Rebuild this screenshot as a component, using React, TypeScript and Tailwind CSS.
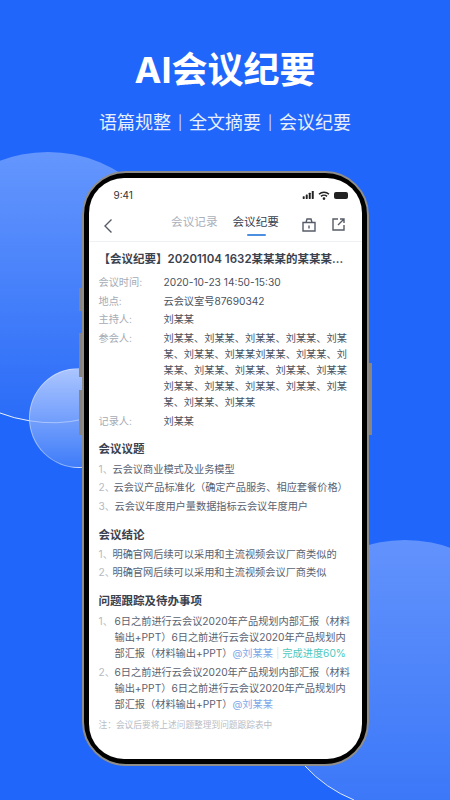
import React from "react";

const FONT = { fontFamily: '"Inter","Noto Sans CJK SC",sans-serif' };

function Meta({ label, children }: { label: string; children: React.ReactNode }) {
  return (
    <div className="flex">
      <div className="w-[65px] shrink-0 text-[#a5abb5]">{label}</div>
      <div className="w-[184px] text-[#4a5260] break-all">{children}</div>
    </div>
  );
}

function Item({ n, numClass, children }: { n: string; numClass: string; children: React.ReactNode }) {
  return (
    <div className="flex text-[#5a6270]">
      <span className={`${numClass} shrink-0 text-[#b4b9c2]`}>{n}</span>
      <span className="whitespace-nowrap">{children}</span>
    </div>
  );
}

function Todo({ n, children }: { n: string; children: React.ReactNode }) {
  return (
    <div className="flex text-[#5a6270]">
      <span className="w-[16px] shrink-0 text-[#b4b9c2]">{n}</span>
      <span className="w-[236px] break-all">{children}</span>
    </div>
  );
}

export default function App() {
  return (
    <div className="relative h-[800px] w-[450px] overflow-hidden bg-[#2066fa]" style={FONT}>
      <div className="absolute left-[-87px] top-[152px] h-[270px] w-[270px] rounded-full bg-[linear-gradient(180deg,#6496fd,#2a6cf8)]" />
      <div className="absolute left-[29px] top-[368px] h-[100px] w-[100px] rounded-full border border-white/40 bg-[linear-gradient(180deg,#abc5ff,#3f7cf9)]" />
      <div className="absolute left-[270px] top-[540px] h-[270px] w-[270px] rounded-full bg-[linear-gradient(180deg,#6292fc,#3a77f8)]" />
      <svg className="absolute left-0 top-0" width="450" height="800" fill="none">
        <path d="M0 413 A135 135 0 0 0 29 420.7" stroke="#fff" strokeOpacity=".9" />
        <path d="M29 420.7 A135 135 0 0 0 84 419" stroke="#fff" strokeOpacity=".4" />
        <path d="M305 766 A135 135 0 0 0 354 800" stroke="#fff" strokeOpacity=".85" />
      </svg>

      <div className="relative flex flex-col items-center">
        <h1 className="mt-[45px] text-[36px] leading-[50px] font-bold text-white">AI会议纪要</h1>
        <div className="mt-[15px] flex text-[18px] leading-[26px] text-[#e8efff]">
          <span>语篇规整</span>
          <span className="w-[18px] text-center text-[14px] text-[#c4d6ff]">|</span>
          <span>全文摘要</span>
          <span className="w-[18px] text-center text-[14px] text-[#c4d6ff]">|</span>
          <span>会议纪要</span>
        </div>

        <div className="relative mt-[35px] h-[595px] w-[287px] rounded-[44px] border-[2px] border-[#8f8d8a] bg-black p-[5px]">
          <div className="absolute left-[-5px] top-[115px] h-[23px] w-[3px] bg-[#8a8580]" />
          <div className="absolute left-[-5px] top-[160px] h-[44px] w-[3px] bg-[#8a8580]" />
          <div className="absolute left-[-5px] top-[217px] h-[45px] w-[3px] bg-[#8a8580]" />
          <div className="absolute right-[-5px] top-[190px] h-[72px] w-[3px] bg-[#8a8580]" />

          <div className="h-full w-full overflow-hidden rounded-[35px] bg-white">
            <div className="flex items-center justify-between pl-[25px] pr-[14px] pt-[10px] text-[10px] leading-[14px] text-[#333]">
              <span>9:41</span>
              <div className="flex items-center gap-[3px]">
                <svg width="13" height="8" viewBox="0 0 13 9" fill="#222"><rect x="0" y="6" width="2.2" height="3" rx=".5" /><rect x="3.4" y="4" width="2.2" height="5" rx=".5" /><rect x="6.8" y="2" width="2.2" height="7" rx=".5" /><rect x="10.2" y="0" width="2.2" height="9" rx=".5" /></svg>
                <svg width="12" height="9" viewBox="0 0 12 9" fill="none" stroke="#222" strokeWidth="1.5"><path d="M1 3.2a7.2 7.2 0 0 1 10 0" /><path d="M3 5.4a4.3 4.3 0 0 1 6 0" /><circle cx="6" cy="7.6" r=".6" fill="#222" /></svg>
                <div className="ml-[1px] h-[7px] w-[14px] rounded-[2px] bg-[#222]" />
              </div>
            </div>

            <div className="relative flex h-[40px] items-center justify-center gap-[15px] border-b border-[#f0f1f4] text-[11.6px] leading-[16px]">
              <svg className="absolute left-[14px] top-[16px]" width="10" height="16" viewBox="0 0 10 16" fill="none" stroke="#555c68" strokeWidth="1.4"><path d="M8.5 1.5 2 8l6.5 6.5" /></svg>
              <span className="text-[#aab0ba]">会议记录</span>
              <span className="relative text-[#3a414d]">
                会议纪要
                <span className="absolute left-[14px] top-[20px] h-[2px] w-[19px] rounded-full bg-[#4c8fe0]" />
              </span>
              <svg className="absolute left-[212px] top-[15px]" width="16" height="16" viewBox="0 0 16 16" fill="none" stroke="#555c68" strokeWidth="1.4"><path d="M2 5.5h12V14H2zM5 5.5 6 2h4l1 3.5M8 8.5v3" /></svg>
              <svg className="absolute left-[242px] top-[15px]" width="15" height="15" viewBox="0 0 15 15" fill="none" stroke="#555c68" strokeWidth="1.4"><path d="M7 2H2v11h11V8M9 2h4v4M13 2 7 8" /></svg>
            </div>

            <div className="px-[10px] pt-[9px] text-[10.2px] leading-[16px]">
              <div className="whitespace-nowrap text-[11.5px] font-semibold text-[#3a414d]">【会议纪要】20201104 1632某某某的某某某...</div>
              <div className="mt-[7px] flex flex-col gap-[2.67px]">
                <Meta label="会议时间:">2020-10-23 14:50-15:30</Meta>
                <Meta label="地点:">云会议室号87690342</Meta>
                <Meta label="主持人:">刘某某</Meta>
                <Meta label="参会人:">刘某某、刘某某、刘某某、刘某某、刘某某、刘某某、刘某某刘某某、刘某某、刘某某、刘某某、刘某某、刘某某、刘某某刘某某、刘某某、刘某某、刘某某、刘某某、刘某某、刘某某</Meta>
                <Meta label="记录人:">刘某某</Meta>
              </div>

              <div className="mt-[12.5px] text-[11.5px] font-semibold text-[#3a414d]">会议议题</div>
              <div className="mt-[3.5px] flex flex-col gap-[2.5px]">
                <Item n="1、" numClass="w-[14px]">云会议商业模式及业务模型</Item>
                <Item n="2、" numClass="w-[15px]">云会议产品标准化（确定产品服务、相应套餐价格）</Item>
                <Item n="3、" numClass="w-[16px]">云会议年度用户量数据指标云会议年度用户</Item>
              </div>

              <div className="mt-[13px] text-[11.5px] font-semibold text-[#3a414d]">会议结论</div>
              <div className="mt-[3px] flex flex-col gap-[2.5px]">
                <Item n="1、" numClass="w-[14px]">明确官网后续可以采用和主流视频会议厂商类似的</Item>
                <Item n="2、" numClass="w-[14px]">明确官网后续可以采用和主流视频会议厂商类似</Item>
              </div>

              <div className="mt-[12.5px] text-[11.5px] font-semibold text-[#3a414d]">问题跟踪及待办事项</div>
              <div className="mt-[4px] flex flex-col gap-[3px]">
                <Todo n="1、">6日之前进行云会议2020年产品规划内部汇报（材料输出+PPT）6日之前进行云会议2020年产品规划内部汇报（材料输出+PPT）<span className="text-[#7fa8e8]">@刘某某</span><span className="mx-[3px] text-[#d5e6ea]">|</span><span className="text-[#4cc9c0]">完成进度60%</span></Todo>
                <Todo n="2、">6日之前进行云会议2020年产品规划内部汇报（材料输出+PPT）6日之前进行云会议2020年产品规划内部汇报（材料输出+PPT）<span className="text-[#7fa8e8]">@刘某某</span></Todo>
              </div>
              <div className="mt-[5px] text-[8.7px] text-[#b9bdc5]">注：会议后要将上述问题整理到问题跟踪表中</div>
            </div>
          </div>
        </div>
      </div>
    </div>
  );
}
